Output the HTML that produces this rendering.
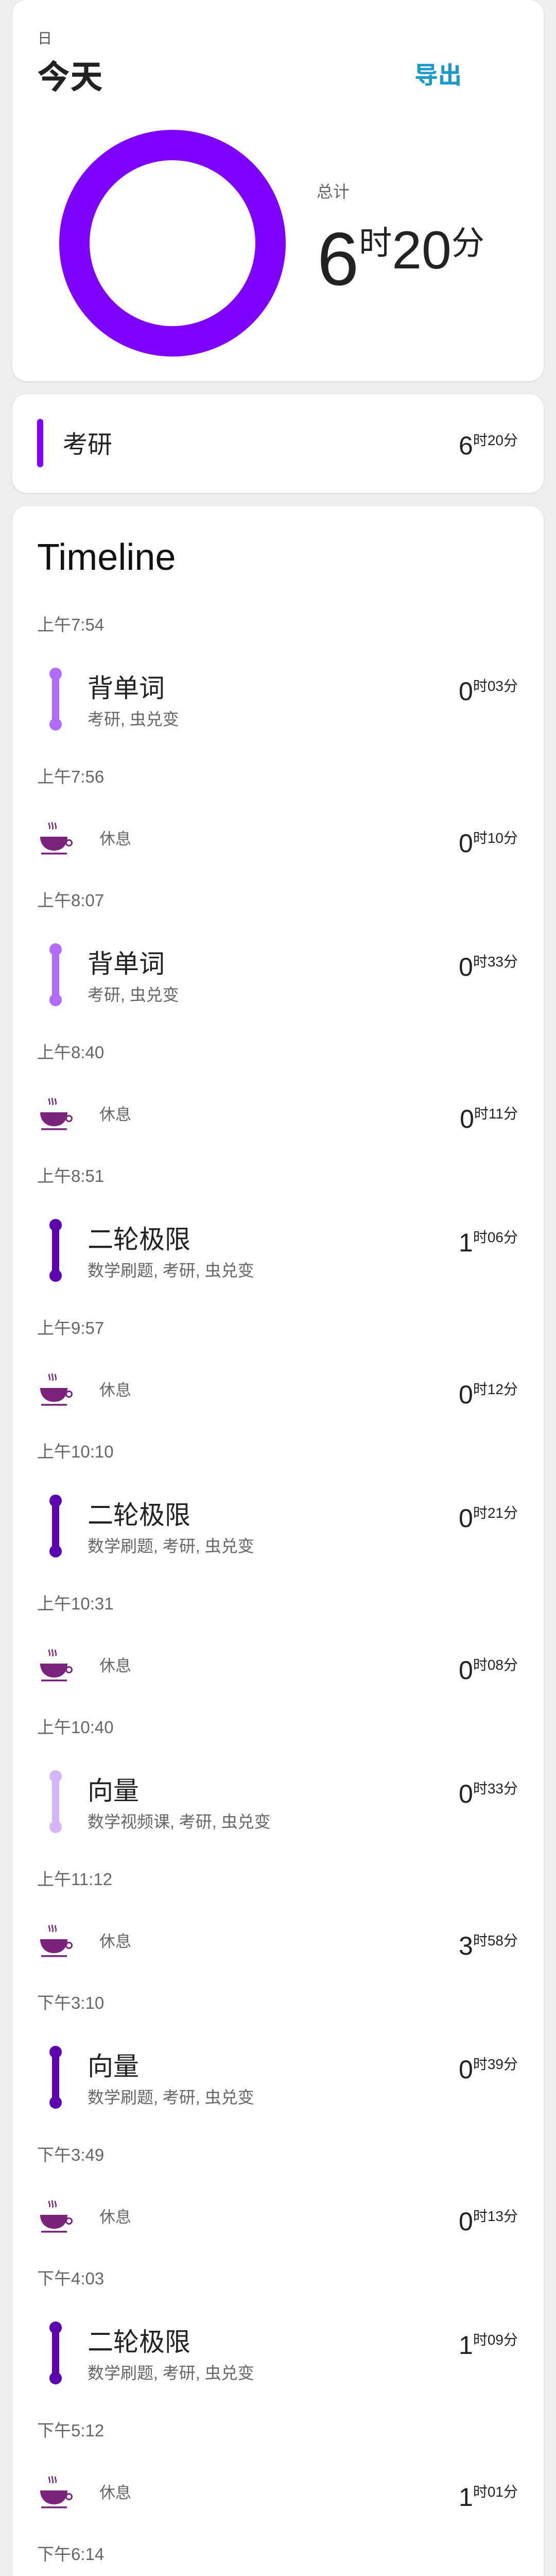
<!DOCTYPE html>
<html><head><meta charset="utf-8"><style>
*{margin:0;padding:0;box-sizing:border-box}
html,body{width:1080px;height:6084px;overflow:hidden}
body{background:#eeeeee;font-family:"Liberation Sans","Noto Sans CJK SC",sans-serif;color:#222;position:relative}
.card{position:absolute;left:24px;width:1032px;background:#fff;border-radius:28px;box-shadow:0 1px 3px rgba(0,0,0,0.12)}
.abs{position:absolute;white-space:nowrap}
.dur{position:absolute;right:74px;white-space:nowrap;color:#222}
.dur .b{font-size:50px;line-height:50px;vertical-align:top}
.dur .s{font-size:28px;line-height:28px;vertical-align:top;position:relative;top:1px}
.blk{position:relative;height:295px}
.blk.br{height:240px}
.lbl{position:absolute;left:72px;top:0;font-size:33px;line-height:40px;color:#666}
.bar{position:absolute;left:96px;top:103px;width:24px;height:122px}
.bar i{position:absolute;left:5px;top:12px;width:14px;height:98px}
.bar b{position:absolute;left:0;width:24px;height:24px;border-radius:50%}
.ttl{position:absolute;left:170px;top:116px;font-size:50px;line-height:54px;color:#222}
.sub{position:absolute;left:170px;top:185px;font-size:32px;line-height:36px;color:#666}
.cup{position:absolute;left:78px;top:107px}
.rest{position:absolute;left:193px;top:122px;font-size:31px;line-height:38px;color:#666}
</style></head><body>

<div class="card" style="top:0;height:740px"></div>
<div class="abs" style="left:73px;top:58px;font-size:28px;line-height:34px;color:#555">日</div>
<div class="abs" style="left:72px;top:112px;font-size:64px;line-height:76px;font-weight:bold;color:#222">今天</div>
<div class="abs" style="left:805px;top:118px;font-size:46px;line-height:56px;font-weight:bold;color:#1a9ac8">导出</div>
<svg class="abs" style="left:110px;top:247px" width="450" height="450"><circle cx="225" cy="225" r="190.5" fill="none" stroke="#8000ff" stroke-width="59"/></svg>
<div class="abs" style="left:615px;top:352px;font-size:32px;line-height:40px;color:#666">总计</div>
<div class="abs" style="left:616px;top:428px;color:#222;line-height:150px"><span style="font-size:146px;vertical-align:top">6</span><span style="font-size:64px;vertical-align:top;line-height:64px;position:relative;top:12px">时</span><span style="font-size:104px;vertical-align:top;line-height:104px;position:relative;top:6px">20</span><span style="font-size:64px;vertical-align:top;line-height:64px;position:relative;top:12px">分</span></div>

<div class="card" style="top:765px;height:192px"></div>
<div class="abs" style="left:72px;top:813px;width:12px;height:94px;border-radius:6px;background:#8000ff"></div>
<div class="abs" style="left:122px;top:834px;font-size:48px;line-height:60px;color:#222">考研</div>
<div class="dur" style="right:74px;top:840px"><span class="b">6</span><span class="s">时20分</span></div>

<div class="card" style="top:982px;height:5102px;border-bottom-left-radius:0;border-bottom-right-radius:0"></div>
<div class="abs" style="left:72px;top:1040px;font-size:72px;line-height:84px;color:#111">Timeline</div>

<div style="position:absolute;left:0;top:1193px;width:1080px;height:4891px;overflow:hidden">
<div class="blk"><div class="lbl">上午7:54</div><div class="bar"><i style="background:#b36bff"></i><b style="top:0;background:#b36bff"></b><b style="bottom:0;background:#b36bff"></b></div><div class="ttl">背单词</div><div class="sub">考研, 虫兑变</div><div class="dur" style="top:124px"><span class="b">0</span><span class="s">时03分</span></div></div>
<div class="blk br"><div class="lbl">上午7:56</div><svg class="cup" width="64" height="66" viewBox="0 0 64 66"><path d="M18 2c-3 4 3 6 0 12M24 1c-3 4 3 7 0 14M30 2c-3 4 3 6 0 12" stroke="#7b237c" stroke-width="2.5" fill="none"/><path d="M0 29h53c0 14-8 27-26 27S0 43 0 29z" fill="#7b237c"/><circle cx="56" cy="41" r="5.5" fill="none" stroke="#7b237c" stroke-width="3"/><rect x="2" y="60" width="50" height="3.5" fill="#7b237c"/></svg><div class="rest">休息</div><div class="dur" style="top:124px"><span class="b">0</span><span class="s">时10分</span></div></div>
<div class="blk"><div class="lbl">上午8:07</div><div class="bar"><i style="background:#b36bff"></i><b style="top:0;background:#b36bff"></b><b style="bottom:0;background:#b36bff"></b></div><div class="ttl">背单词</div><div class="sub">考研, 虫兑变</div><div class="dur" style="top:124px"><span class="b">0</span><span class="s">时33分</span></div></div>
<div class="blk br"><div class="lbl">上午8:40</div><svg class="cup" width="64" height="66" viewBox="0 0 64 66"><path d="M18 2c-3 4 3 6 0 12M24 1c-3 4 3 7 0 14M30 2c-3 4 3 6 0 12" stroke="#7b237c" stroke-width="2.5" fill="none"/><path d="M0 29h53c0 14-8 27-26 27S0 43 0 29z" fill="#7b237c"/><circle cx="56" cy="41" r="5.5" fill="none" stroke="#7b237c" stroke-width="3"/><rect x="2" y="60" width="50" height="3.5" fill="#7b237c"/></svg><div class="rest">休息</div><div class="dur" style="top:124px"><span class="b">0</span><span class="s">时11分</span></div></div>
<div class="blk"><div class="lbl">上午8:51</div><div class="bar"><i style="background:#5c00b0"></i><b style="top:0;background:#5c00b0"></b><b style="bottom:0;background:#5c00b0"></b></div><div class="ttl">二轮极限</div><div class="sub">数学刷题, 考研, 虫兑变</div><div class="dur" style="top:124px"><span class="b">1</span><span class="s">时06分</span></div></div>
<div class="blk br"><div class="lbl">上午9:57</div><svg class="cup" width="64" height="66" viewBox="0 0 64 66"><path d="M18 2c-3 4 3 6 0 12M24 1c-3 4 3 7 0 14M30 2c-3 4 3 6 0 12" stroke="#7b237c" stroke-width="2.5" fill="none"/><path d="M0 29h53c0 14-8 27-26 27S0 43 0 29z" fill="#7b237c"/><circle cx="56" cy="41" r="5.5" fill="none" stroke="#7b237c" stroke-width="3"/><rect x="2" y="60" width="50" height="3.5" fill="#7b237c"/></svg><div class="rest">休息</div><div class="dur" style="top:124px"><span class="b">0</span><span class="s">时12分</span></div></div>
<div class="blk"><div class="lbl">上午10:10</div><div class="bar"><i style="background:#5c00b0"></i><b style="top:0;background:#5c00b0"></b><b style="bottom:0;background:#5c00b0"></b></div><div class="ttl">二轮极限</div><div class="sub">数学刷题, 考研, 虫兑变</div><div class="dur" style="top:124px"><span class="b">0</span><span class="s">时21分</span></div></div>
<div class="blk br"><div class="lbl">上午10:31</div><svg class="cup" width="64" height="66" viewBox="0 0 64 66"><path d="M18 2c-3 4 3 6 0 12M24 1c-3 4 3 7 0 14M30 2c-3 4 3 6 0 12" stroke="#7b237c" stroke-width="2.5" fill="none"/><path d="M0 29h53c0 14-8 27-26 27S0 43 0 29z" fill="#7b237c"/><circle cx="56" cy="41" r="5.5" fill="none" stroke="#7b237c" stroke-width="3"/><rect x="2" y="60" width="50" height="3.5" fill="#7b237c"/></svg><div class="rest">休息</div><div class="dur" style="top:124px"><span class="b">0</span><span class="s">时08分</span></div></div>
<div class="blk"><div class="lbl">上午10:40</div><div class="bar"><i style="background:#d6b4ff"></i><b style="top:0;background:#d6b4ff"></b><b style="bottom:0;background:#d6b4ff"></b></div><div class="ttl">向量</div><div class="sub">数学视频课, 考研, 虫兑变</div><div class="dur" style="top:124px"><span class="b">0</span><span class="s">时33分</span></div></div>
<div class="blk br"><div class="lbl">上午11:12</div><svg class="cup" width="64" height="66" viewBox="0 0 64 66"><path d="M18 2c-3 4 3 6 0 12M24 1c-3 4 3 7 0 14M30 2c-3 4 3 6 0 12" stroke="#7b237c" stroke-width="2.5" fill="none"/><path d="M0 29h53c0 14-8 27-26 27S0 43 0 29z" fill="#7b237c"/><circle cx="56" cy="41" r="5.5" fill="none" stroke="#7b237c" stroke-width="3"/><rect x="2" y="60" width="50" height="3.5" fill="#7b237c"/></svg><div class="rest">休息</div><div class="dur" style="top:124px"><span class="b">3</span><span class="s">时58分</span></div></div>
<div class="blk"><div class="lbl">下午3:10</div><div class="bar"><i style="background:#5c00b0"></i><b style="top:0;background:#5c00b0"></b><b style="bottom:0;background:#5c00b0"></b></div><div class="ttl">向量</div><div class="sub">数学刷题, 考研, 虫兑变</div><div class="dur" style="top:124px"><span class="b">0</span><span class="s">时39分</span></div></div>
<div class="blk br"><div class="lbl">下午3:49</div><svg class="cup" width="64" height="66" viewBox="0 0 64 66"><path d="M18 2c-3 4 3 6 0 12M24 1c-3 4 3 7 0 14M30 2c-3 4 3 6 0 12" stroke="#7b237c" stroke-width="2.5" fill="none"/><path d="M0 29h53c0 14-8 27-26 27S0 43 0 29z" fill="#7b237c"/><circle cx="56" cy="41" r="5.5" fill="none" stroke="#7b237c" stroke-width="3"/><rect x="2" y="60" width="50" height="3.5" fill="#7b237c"/></svg><div class="rest">休息</div><div class="dur" style="top:124px"><span class="b">0</span><span class="s">时13分</span></div></div>
<div class="blk"><div class="lbl">下午4:03</div><div class="bar"><i style="background:#5c00b0"></i><b style="top:0;background:#5c00b0"></b><b style="bottom:0;background:#5c00b0"></b></div><div class="ttl">二轮极限</div><div class="sub">数学刷题, 考研, 虫兑变</div><div class="dur" style="top:124px"><span class="b">1</span><span class="s">时09分</span></div></div>
<div class="blk br"><div class="lbl">下午5:12</div><svg class="cup" width="64" height="66" viewBox="0 0 64 66"><path d="M18 2c-3 4 3 6 0 12M24 1c-3 4 3 7 0 14M30 2c-3 4 3 6 0 12" stroke="#7b237c" stroke-width="2.5" fill="none"/><path d="M0 29h53c0 14-8 27-26 27S0 43 0 29z" fill="#7b237c"/><circle cx="56" cy="41" r="5.5" fill="none" stroke="#7b237c" stroke-width="3"/><rect x="2" y="60" width="50" height="3.5" fill="#7b237c"/></svg><div class="rest">休息</div><div class="dur" style="top:124px"><span class="b">1</span><span class="s">时01分</span></div></div>
<div class="blk"><div class="lbl">下午6:14</div><div class="bar"><i style="background:#300066"></i><b style="top:0;background:#300066"></b><b style="bottom:0;background:#300066"></b></div><div class="ttl">看书语法长难句</div><div class="sub">英语, 考研, 虫兑变</div><div class="dur" style="top:124px"><span class="b">0</span><span class="s">时49分</span></div></div>
<div class="blk br"><div class="lbl">下午7:03</div><svg class="cup" width="64" height="66" viewBox="0 0 64 66"><path d="M18 2c-3 4 3 6 0 12M24 1c-3 4 3 7 0 14M30 2c-3 4 3 6 0 12" stroke="#7b237c" stroke-width="2.5" fill="none"/><path d="M0 29h53c0 14-8 27-26 27S0 43 0 29z" fill="#7b237c"/><circle cx="56" cy="41" r="5.5" fill="none" stroke="#7b237c" stroke-width="3"/><rect x="2" y="60" width="50" height="3.5" fill="#7b237c"/></svg><div class="rest">休息</div><div class="dur" style="top:124px"><span class="b">1</span><span class="s">时36分</span></div></div>
<div class="blk"><div class="lbl">下午8:39</div><div class="bar"><i style="background:#b36bff"></i><b style="top:0;background:#b36bff"></b><b style="bottom:0;background:#b36bff"></b></div><div class="ttl">OS</div><div class="sub">专业课, 考研, 虫兑变</div><div class="dur" style="top:124px"><span class="b">0</span><span class="s">时25分</span></div></div>
<div class="blk"><div class="lbl">下午9:04</div><div class="bar"><i style="background:#300066"></i><b style="top:0;background:#300066"></b><b style="bottom:0;background:#300066"></b></div><div class="ttl">刘晓燕长难句</div><div class="sub">英语, 考研, 虫兑变</div><div class="dur" style="top:124px"><span class="b">0</span><span class="s">时42分</span></div></div>
<div class="blk br"><div class="lbl">下午9:47</div></div>
</div>
</body></html>
